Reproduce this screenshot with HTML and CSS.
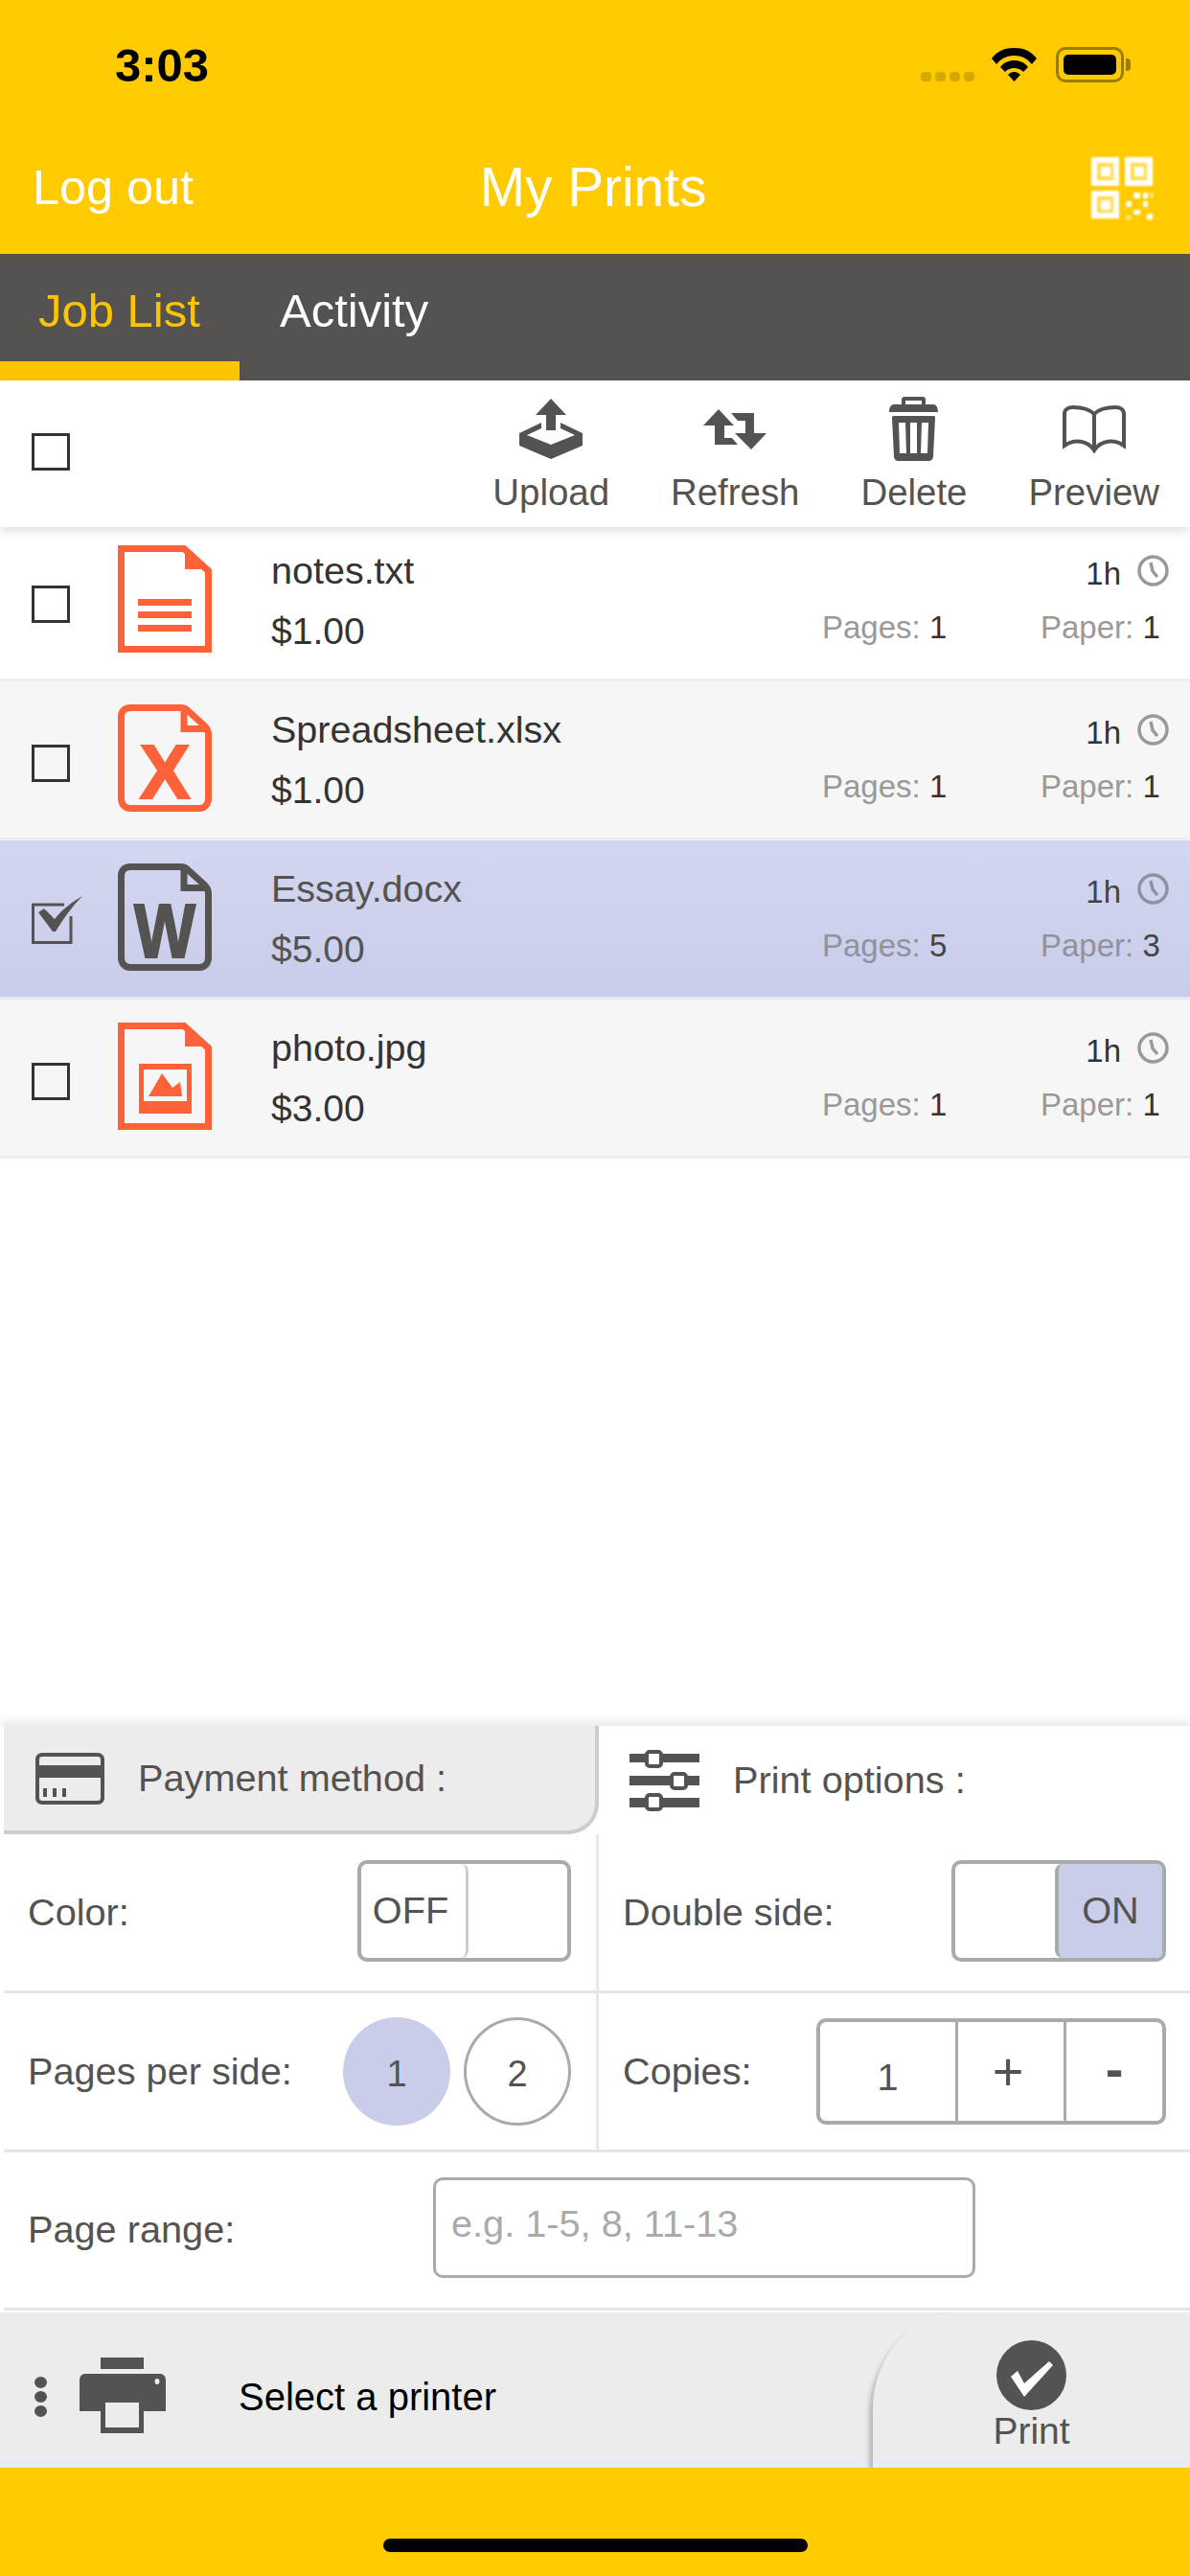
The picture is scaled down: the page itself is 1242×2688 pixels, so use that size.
FILE: index.html
```html
<!DOCTYPE html>
<html lang="en">
<head>
    <meta charset="UTF-8">
    <title>My Prints</title>
    <link rel="stylesheet" href="styles.css">
</head>
<body>

<!-- Top bar -->
<div class="header">
    <div class="status">
        <span class="time">3:03</span>
        <div class="status-icons">
            <div class="signal"><i></i><i></i><i></i><i></i></div>
            <svg class="wifi" width="47" height="35" viewBox="0 0 47 35">
                <path d="M0 11C6 3 14 0 23.500 0S41 3 47 11L42 17C37 11 31 8 23.500 8S10 11 5 17Z"/>
                <path d="M9 20C13 15 18 13 23.500 13S34 15 38 20L33 25C30 22 27 21 23.500 21S17 22 14 25Z"/>
                <path d="M17 28C19 26 21 25 23.500 25S28 26 30 28L23.500 35Z"/>
            </svg>
            <div class="battery"><div class="battery-fill"></div></div>
            <div class="battery-nub"></div>
        </div>
    </div>
    <div class="nav">
        <span class="logout">Log out</span>
        <span class="title">My Prints</span>
        <svg class="qr" width="65" height="66" viewBox="0 0 65 66" fill="#ffdb4d" stroke="#fff" stroke-width="6">
            <rect x="3" y="3" width="23" height="24"/>
            <rect x="38" y="3" width="23" height="24"/>
            <rect x="3" y="38" width="23" height="23"/>
            <path d="M10 10h10v10h-10zM45 10h10v10h-10zM10 45h10v10h-10z" fill="#fff" stroke="none"/>
            <path d="M44 37h7v6h-7zM54 37h5v6h-5zM36 46h6v6h-6zM54 46h5v6h-5zM44 55h7v5h-7zM58 59h6v6h-6z" fill="#fff" stroke="none"/>
            <path d="M61 37h4v5h-4zM36 61h6v4h-6z" fill="#ffe680" stroke="none"/>
        </svg>
    </div>
</div>

<div class="tabs">
    <div class="tab tab-active">Job List</div>
    <div class="tab">Activity</div>
</div>

<!-- Actions -->
<div class="toolbar">
    <div class="checkbox toolbar-check"></div>
    <div class="tool">
        <div class="tool-icon">
            <svg width="66" height="63" viewBox="0 0 66 63" class="dark">
                <path d="M33 0L49 17H38V33H28V17H17Z"/>
                <path d="M23 25L0 36V49L33 63L66 49V36L43 25V31L58 38L33 48L8 38L23 31Z"/>
            </svg>
        </div>
        <span>Upload</span>
    </div>
    <div class="tool">
        <div class="tool-icon">
            <svg width="66" height="42" viewBox="0 0 66 42" class="dark">
                <path d="M16 0L32 17H22V30H30L36 37H12V17H0Z"/>
                <path d="M50 42L33 25H44V12H36L29 4H53V25H66Z"/>
            </svg>
        </div>
        <span>Refresh</span>
    </div>
    <div class="tool">
        <div class="tool-icon">
            <svg width="51" height="67" viewBox="0 0 51 67" class="dark">
                <path fill-rule="evenodd" d="M13 8V3C13 1 14 0 16 0H35C37 0 38 1 38 3V8H46C49 8 51 11 51 16H0C0 11 2 8 5 8ZM17 8H34V4H17Z"/>
                <path fill-rule="evenodd" d="M3 22C3 20 4 20 5 20H46C47 20 48 20 48 22L46 62C46 65 44 67 41 67H10C7 67 5 65 5 62ZM10 27L11 59H18L17 27ZM22 27V59H29V27ZM34 27L33 59H40L41 27Z"/>
            </svg>
        </div>
        <span>Delete</span>
    </div>
    <div class="tool">
        <div class="tool-icon">
            <svg width="66" height="50" viewBox="0 0 66 50" fill="none" stroke="#545351" stroke-width="4">
                <path d="M33 9C28 4 20 2 11 2C5 2 2 5 2 9V42C12 35 26 36 33 47C40 36 54 35 64 42V9C64 5 61 2 55 2C46 2 38 4 33 9V44"/>
            </svg>
        </div>
        <span>Preview</span>
    </div>
</div>

<!-- Job list -->
<div class="jobs">
    <div class="job">
        <div class="job-check"><div class="checkbox"></div></div>
        <svg class="file" width="98" height="112" viewBox="0 0 98 112" fill="none" stroke="#ff6238" stroke-width="7">
            <path d="M3.500 3.500H69L94.500 27V108.500H3.500Z"/>
            <path d="M70 0L98 25H70Z" fill="#ff6238" stroke="none"/>
            <path d="M21 59.500H77M21 72.500H77M21 86.500H77"/>
        </svg>
        <div class="info">
            <div>notes.txt</div>
            <div class="price">$1.00</div>
        </div>
        <div class="meta">
            <div class="age">1h
                <svg class="clock" width="33" height="33" viewBox="0 0 33 33" fill="none" stroke="#999" stroke-width="3.500"><circle cx="16.500" cy="16.500" r="14.500"/><path d="M14 8L16 17L21 23"/></svg>
            </div>
            <div class="counts">
                <span class="count"><em>Pages:</em> 1</span>
                <span class="count"><em>Paper:</em> 1</span>
            </div>
        </div>
    </div>
    <div class="job job-alt">
        <div class="job-check"><div class="checkbox"></div></div>
        <svg class="file" width="98" height="112" viewBox="0 0 98 112" fill="none" stroke="#ff6238" stroke-width="7">
            <path d="M13 3.500H66C69 3.500 71 4.500 73 6.500L90 22C93 25 94.500 27 94.500 31V98C94.500 104 91 108.500 85 108.500H13C7 108.500 3.500 104 3.500 98V13C3.500 7 7 3.500 13 3.500Z"/>
            <path d="M69 3.500V25.500H94"/>
            <text x="49" y="98" class="file-letter" fill="#ff6238" stroke="#ff6238" stroke-width="2" text-anchor="middle">X</text>
        </svg>
        <div class="info">
            <div>Spreadsheet.xlsx</div>
            <div class="price">$1.00</div>
        </div>
        <div class="meta">
            <div class="age">1h
                <svg class="clock" width="33" height="33" viewBox="0 0 33 33" fill="none" stroke="#999" stroke-width="3.500"><circle cx="16.500" cy="16.500" r="14.500"/><path d="M14 8L16 17L21 23"/></svg>
            </div>
            <div class="counts">
                <span class="count"><em>Pages:</em> 1</span>
                <span class="count"><em>Paper:</em> 1</span>
            </div>
        </div>
    </div>
    <div class="job job-selected">
        <div class="job-check">
            <svg class="tick" width="54" height="51" viewBox="0 0 54 51" fill="none" stroke="#545351" stroke-width="3">
                <path d="M41 21V48.500H1.500V9H34"/>
                <path d="M7 17L13 13L24 24C32 14 41 7 53 0C42 11 33 24 25 37H22Z" fill="#545351" stroke="none"/>
            </svg>
        </div>
        <svg class="file" width="98" height="112" viewBox="0 0 98 112" fill="none" stroke="#545351" stroke-width="7">
            <path d="M13 3.500H66C69 3.500 71 4.500 73 6.500L90 22C93 25 94.500 27 94.500 31V98C94.500 104 91 108.500 85 108.500H13C7 108.500 3.500 104 3.500 98V13C3.500 7 7 3.500 13 3.500Z"/>
            <path d="M69 3.500V25.500H94"/>
            <text x="17" y="98" class="file-letter" textLength="64" lengthAdjust="spacingAndGlyphs" fill="#545351" stroke="#545351" stroke-width="2">W</text>
        </svg>
        <div class="info">
            <div>Essay.docx</div>
            <div class="price">$5.00</div>
        </div>
        <div class="meta">
            <div class="age">1h
                <svg class="clock" width="33" height="33" viewBox="0 0 33 33" fill="none" stroke="#90929f" stroke-width="3.500"><circle cx="16.500" cy="16.500" r="14.500"/><path d="M14 8L16 17L21 23"/></svg>
            </div>
            <div class="counts">
                <span class="count"><em>Pages:</em> 5</span>
                <span class="count"><em>Paper:</em> 3</span>
            </div>
        </div>
    </div>
    <div class="job job-alt">
        <div class="job-check"><div class="checkbox"></div></div>
        <svg class="file" width="98" height="112" viewBox="0 0 98 112" fill="none" stroke="#ff6238" stroke-width="7">
            <path d="M3.500 3.500H69L94.500 27V108.500H3.500Z"/>
            <path d="M70 0L98 25H70Z" fill="#ff6238" stroke="none"/>
            <rect x="22" y="43" width="55" height="52" fill="#ff6238" stroke="none"/>
            <rect x="27" y="49" width="45" height="33" fill="#f6f6f6" stroke="none"/>
            <path d="M32 77L46 53L57 68L65 62L67 77Z" fill="#ff6238" stroke="none"/>
        </svg>
        <div class="info">
            <div>photo.jpg</div>
            <div class="price">$3.00</div>
        </div>
        <div class="meta">
            <div class="age">1h
                <svg class="clock" width="33" height="33" viewBox="0 0 33 33" fill="none" stroke="#999" stroke-width="3.500"><circle cx="16.500" cy="16.500" r="14.500"/><path d="M14 8L16 17L21 23"/></svg>
            </div>
            <div class="counts">
                <span class="count"><em>Pages:</em> 1</span>
                <span class="count"><em>Paper:</em> 1</span>
            </div>
        </div>
    </div>
</div>

<!-- Options panel -->
<div class="panel">
    <div class="panel-tabs">
        <div class="panel-tab panel-tab-off">
            <svg width="72" height="54" viewBox="0 0 72 54" class="dark">
                <path fill-rule="evenodd" d="M7 0H65C69 0 72 3 72 7V47C72 51 69 54 65 54H7C3 54 0 51 0 47V7C0 3 3 0 7 0ZM7 4C5 4 4 5 4 7V13H68V7C68 5 67 4 65 4ZM4 26V47C4 49 5 50 7 50H65C67 50 68 49 68 47V26Z"/>
                <path d="M8 37H12V46H8ZM18 37H22V46H18ZM28 37H32V46H28Z"/>
            </svg>
            <span>Payment method :</span>
        </div>
        <div class="panel-tab">
            <svg width="73" height="64" viewBox="0 0 73 64">
                <path d="M0 4H73V13H0ZM0 27H73V37H0ZM0 50H73V60H0Z" fill="#545351"/>
                <g fill="#fff" stroke="#545351" stroke-width="4">
                    <rect x="18" y="2" width="15" height="15" rx="3"/>
                    <rect x="44" y="25" width="15" height="15" rx="3"/>
                    <rect x="18" y="47" width="15" height="15" rx="3"/>
                </g>
            </svg>
            <span>Print options :</span>
        </div>
    </div>

    <div class="opt-row">
        <div class="opt opt-left">
            <span>Color:</span>
            <div class="switch">
                <div class="knob knob-off">OFF</div>
            </div>
        </div>
        <div class="opt">
            <span>Double side:</span>
            <div class="switch switch-on">
                <div class="knob knob-on">ON</div>
            </div>
        </div>
    </div>

    <div class="opt-row">
        <div class="opt opt-left">
            <span>Pages per side:</span>
            <div class="circles">
                <div class="circle circle-active">1</div>
                <div class="circle">2</div>
            </div>
        </div>
        <div class="opt">
            <span>Copies:</span>
            <div class="stepper">
                <div class="step-value">1</div>
                <div class="step-btn step-plus">+</div>
                <div class="step-btn step-minus">-</div>
            </div>
        </div>
    </div>

    <div class="opt-row range-row">
        <span class="range-label">Page range:</span>
        <div class="range-input">e.g. 1-5, 8, 11-13</div>
    </div>
</div>

<!-- Printer bar -->
<div class="printbar">
    <div class="dots"><i></i><i></i><i></i></div>
    <svg class="printer" width="90" height="79" viewBox="0 0 90 79">
        <path d="M22 0H67V12H22Z" fill="#545351"/>
        <path d="M6 17H84C88 17 90 20 90 24V56H67V79H22V56H0V24C0 20 2 17 6 17Z" fill="#545351"/>
        <path d="M27 47H62V73H27Z" fill="#ececec"/>
        <ellipse cx="81" cy="25" rx="2.500" ry="3" fill="#ececec"/>
    </svg>
    <span class="printer-name">Select a printer</span>
    <div class="print-btn">
        <svg width="73" height="73" viewBox="0 0 73 73">
            <circle cx="36.500" cy="36.500" r="36.500" fill="#545351"/>
            <path d="M15 38L22 32L29 45L55 22L59 26L29 59Z" fill="#fff"/>
        </svg>
        <span>Print</span>
    </div>
</div>

<div class="home"><div class="home-bar"></div></div>

</body>
</html>
```

FILE: styles.css
```css
* {
    box-sizing: border-box;
}
body {
    margin: 0;
    width: 1242px;
    height: 2688px;
    overflow: hidden;
    display: flex;
    flex-direction: column;
    background-color: #fff;
    font-family: "Liberation Sans", Arial, sans-serif;
    font-size: 39.7px;
    color: #545351;
}
.dark {
    fill: #545351;
}

/* header */
.header {
    height: 265px;
    flex: none;
    padding-top: 48px;
    background-color: #ffcb00;
}
.status {
    height: 40px;
    display: flex;
    justify-content: space-between;
    align-items: flex-start;
    padding: 0 62px 0 120px;
}
.time {
    font-size: 49px;
    font-weight: bold;
    line-height: 40px;
    color: #000;
}
.status-icons {
    display: flex;
    align-items: flex-start;
    padding-top: 2px;
}
.signal {
    display: flex;
    gap: 4px;
    margin-top: 25px;
    margin-right: 18px;
}
.signal i {
    width: 11px;
    height: 10px;
    border-radius: 4px;
    background-color: #d4a900;
}
.wifi {
    fill: #000;
    margin-right: 20px;
}
.battery {
    width: 71px;
    height: 37px;
    padding: 5px;
    border: 3px solid #9a7c00;
    border-radius: 10px;
    margin-top: -1px;
}
.battery-fill {
    height: 100%;
    background-color: #000;
    border-radius: 5px;
}
.battery-nub {
    width: 5px;
    height: 13px;
    margin: 11px 0 0 2px;
    border-radius: 0 4px 4px 0;
    background-color: #9a7c00;
}
.nav {
    display: grid;
    grid-template-columns: 1fr auto 1fr;
    align-items: center;
    height: 60px;
    margin-top: 76px;
    padding: 0 38px 0 34px;
    color: #fff;
}
.logout {
    font-size: 50.400px;
    margin-top: -3px;
}
.title {
    font-size: 56.800px;
    margin-top: -4px;
}
.qr {
    justify-self: end;
    filter: blur(1px);
}

/* tabs */
.tabs {
    display: flex;
    height: 132px;
    flex: none;
    background-color: #545351;
    color: #fff;
    font-size: 49px;
}
.tab {
    display: flex;
    align-items: center;
    height: 132px;
    padding: 6px 0 0 42px;
    border-bottom: 20px solid transparent;
}
.tab-active {
    width: 250px;
    padding-left: 40px;
    color: #ffc400;
    border-bottom-color: #ffc400;
}

/* toolbar */
.toolbar {
    position: relative;
    z-index: 1;
    display: flex;
    flex: none;
    align-items: flex-start;
    gap: 64px;
    height: 153px;
    padding: 17px 32px 0 33px;
    background-color: #fff;
    box-shadow: 0 4px 10px rgba(0, 0, 0, 0.13);
}
.checkbox {
    width: 40px;
    height: 39px;
    border: 3px solid #333;
}
.toolbar-check {
    margin-top: 38px;
    margin-right: auto;
}
.tool {
    display: flex;
    flex-direction: column;
    align-items: center;
    font-size: 38.400px;
    line-height: 44px;
}
.tool-icon {
    display: flex;
    align-items: center;
    height: 67px;
    margin-bottom: 11px;
}

/* job list */
.jobs {
    flex: 1;
    margin-top: -5px;
}
.job {
    display: flex;
    align-items: center;
    height: 166px;
    padding-left: 33px;
    border-bottom: 3px solid #eee;
    color: #333;
}
.job-alt {
    background-color: #f6f6f6;
}
.job-selected {
    background: linear-gradient(#d2d6f0, #c9cdea);
    border-bottom-color: #e6e6ee;
    color: #545351;
}
.job-check {
    width: 90px;
    flex: none;
    margin-top: 7px;
}
.tick {
    display: block;
    margin-top: -4px;
}
.file {
    flex: none;
    margin-top: -3px;
    overflow: visible;
}
.file-letter {
    font-family: "Liberation Sans", Arial, sans-serif;
    font-size: 79px;
    font-weight: bold;
}
.info {
    flex: 1;
    margin-left: 62px;
    font-size: 39.500px;
    line-height: 64px;
}
.price {
    font-size: 39px;
}
.meta {
    width: 384px;
    flex: none;
    font-size: 33px;
    line-height: 58px;
    color: #333;
}
.age {
    display: flex;
    justify-content: flex-end;
    align-items: flex-start;
    gap: 17px;
    padding-right: 22px;
}
.clock {
    margin-top: 9px;
}
.counts {
    display: flex;
    margin-top: -2px;
}
.count {
    flex: none;
    width: 228px;
}
.count + .count {
    width: 156px;
}
.count em {
    font-style: normal;
    color: #999;
}
.job-selected .count em {
    color: #90929f;
}
.job-selected .meta {
    color: #444;
}

/* options */
.panel {
    flex: none;
    padding-bottom: 2px;
    background-color: #fff;
    box-shadow: 0 -4px 10px rgba(0, 0, 0, 0.1);
}
.panel-tabs {
    display: flex;
    height: 113px;
}
.panel-tab {
    display: flex;
    align-items: center;
    gap: 35px;
    padding-left: 32px;
    flex: 1;
}
.panel-tab-off {
    flex: none;
    width: 621px;
    margin-left: 4px;
    padding-left: 33px;
    background-color: #ececec;
    border-right: 4px solid #ccc;
    border-bottom: 4px solid #ccc;
    border-bottom-right-radius: 32px;
}
.opt-row {
    display: flex;
    height: 166px;
    margin-left: 4px;
    border-bottom: 3px solid #e6e6e6;
}
.opt {
    flex: 1;
    display: flex;
    align-items: center;
    justify-content: space-between;
    padding: 0 25px 0 25px;
}
.opt-left {
    flex: none;
    width: 621px;
    padding: 0 26px 0 25px;
    border-right: 3px solid #e8e8e8;
}
.switch {
    display: flex;
    width: 223px;
    height: 106px;
    margin-top: -4px;
    border: 4px solid #aaa;
    border-radius: 10px;
}
.switch-on {
    justify-content: flex-end;
    width: 224px;
}
.knob {
    display: flex;
    align-items: center;
    justify-content: center;
    width: 112px;
    padding-right: 6px;
    border-right: 3px solid #ccc;
    border-radius: 0 8px 8px 0;
}
.knob-on {
    width: 112px;
    padding-right: 0;
    background-color: #c9cdea;
    border-right: 0;
    border-left: 4px solid #aaa;
    border-radius: 8px 6px 6px 8px;
}
.circles {
    display: flex;
    gap: 14px;
}
.circle {
    display: flex;
    align-items: center;
    justify-content: center;
    width: 112px;
    height: 113px;
    padding-top: 6px;
    border: 3px solid #aaa;
    border-radius: 50%;
    font-size: 38px;
}
.circle-active {
    background-color: #c9cdea;
    border-color: #c9cdea;
}
.stepper {
    display: flex;
    width: 365px;
    height: 111px;
    border: 4px solid #aaa;
    border-radius: 10px;
    text-align: center;
    line-height: 107px;
}
.step-value {
    width: 141px;
    padding-top: 4px;
}
.step-btn {
    width: 113px;
    border-left: 3px solid #aaa;
    font-size: 56px;
}
.step-plus {
    padding-right: 6px;
    line-height: 103px;
}
.step-minus {
    flex: 1;
    width: auto;
    font-weight: bold;
    line-height: 97px;
}
.range-row {
    align-items: center;
    height: 165px;
    padding-left: 25px;
}
.range-label {
    width: 423px;
    margin-top: -2px;
}
.range-input {
    width: 566px;
    height: 105px;
    margin-top: -6px;
    padding: 0 0 8px 16px;
    display: flex;
    align-items: center;
    border: 3px solid #aaa;
    border-radius: 10px;
    color: #aaa;
}

/* printer bar */
.printbar {
    display: flex;
    flex: none;
    align-items: center;
    height: 162px;
    padding-left: 36px;
    background-color: #ececec;
}
.dots {
    display: flex;
    flex-direction: column;
    gap: 3px;
    margin-top: 14px;
}
.dots i {
    width: 13px;
    height: 12px;
    border-radius: 50%;
    background-color: #545351;
}
.printer {
    margin: 10px 0 0 34px;
}
.printer-name {
    margin: 14px 0 0 76px;
    font-size: 40px;
    color: #000;
}
.print-btn {
    display: flex;
    flex-direction: column;
    align-items: center;
    margin-left: auto;
    width: 331px;
    height: 162px;
    padding-top: 29px;
    font-size: 39px;
    line-height: 44px;
    background-color: #ececec;
    border-top-left-radius: 92px 100px;
    box-shadow: -5px 6px 5px -1px rgba(0, 0, 0, 0.22);
}

/* home indicator */
.home {
    position: relative;
    display: flex;
    flex: none;
    justify-content: center;
    height: 113px;
    padding-top: 74px;
    background-color: #ffcb00;
}
.home-bar {
    width: 443px;
    height: 14px;
    border-radius: 7px;
    background-color: #000;
}
```
